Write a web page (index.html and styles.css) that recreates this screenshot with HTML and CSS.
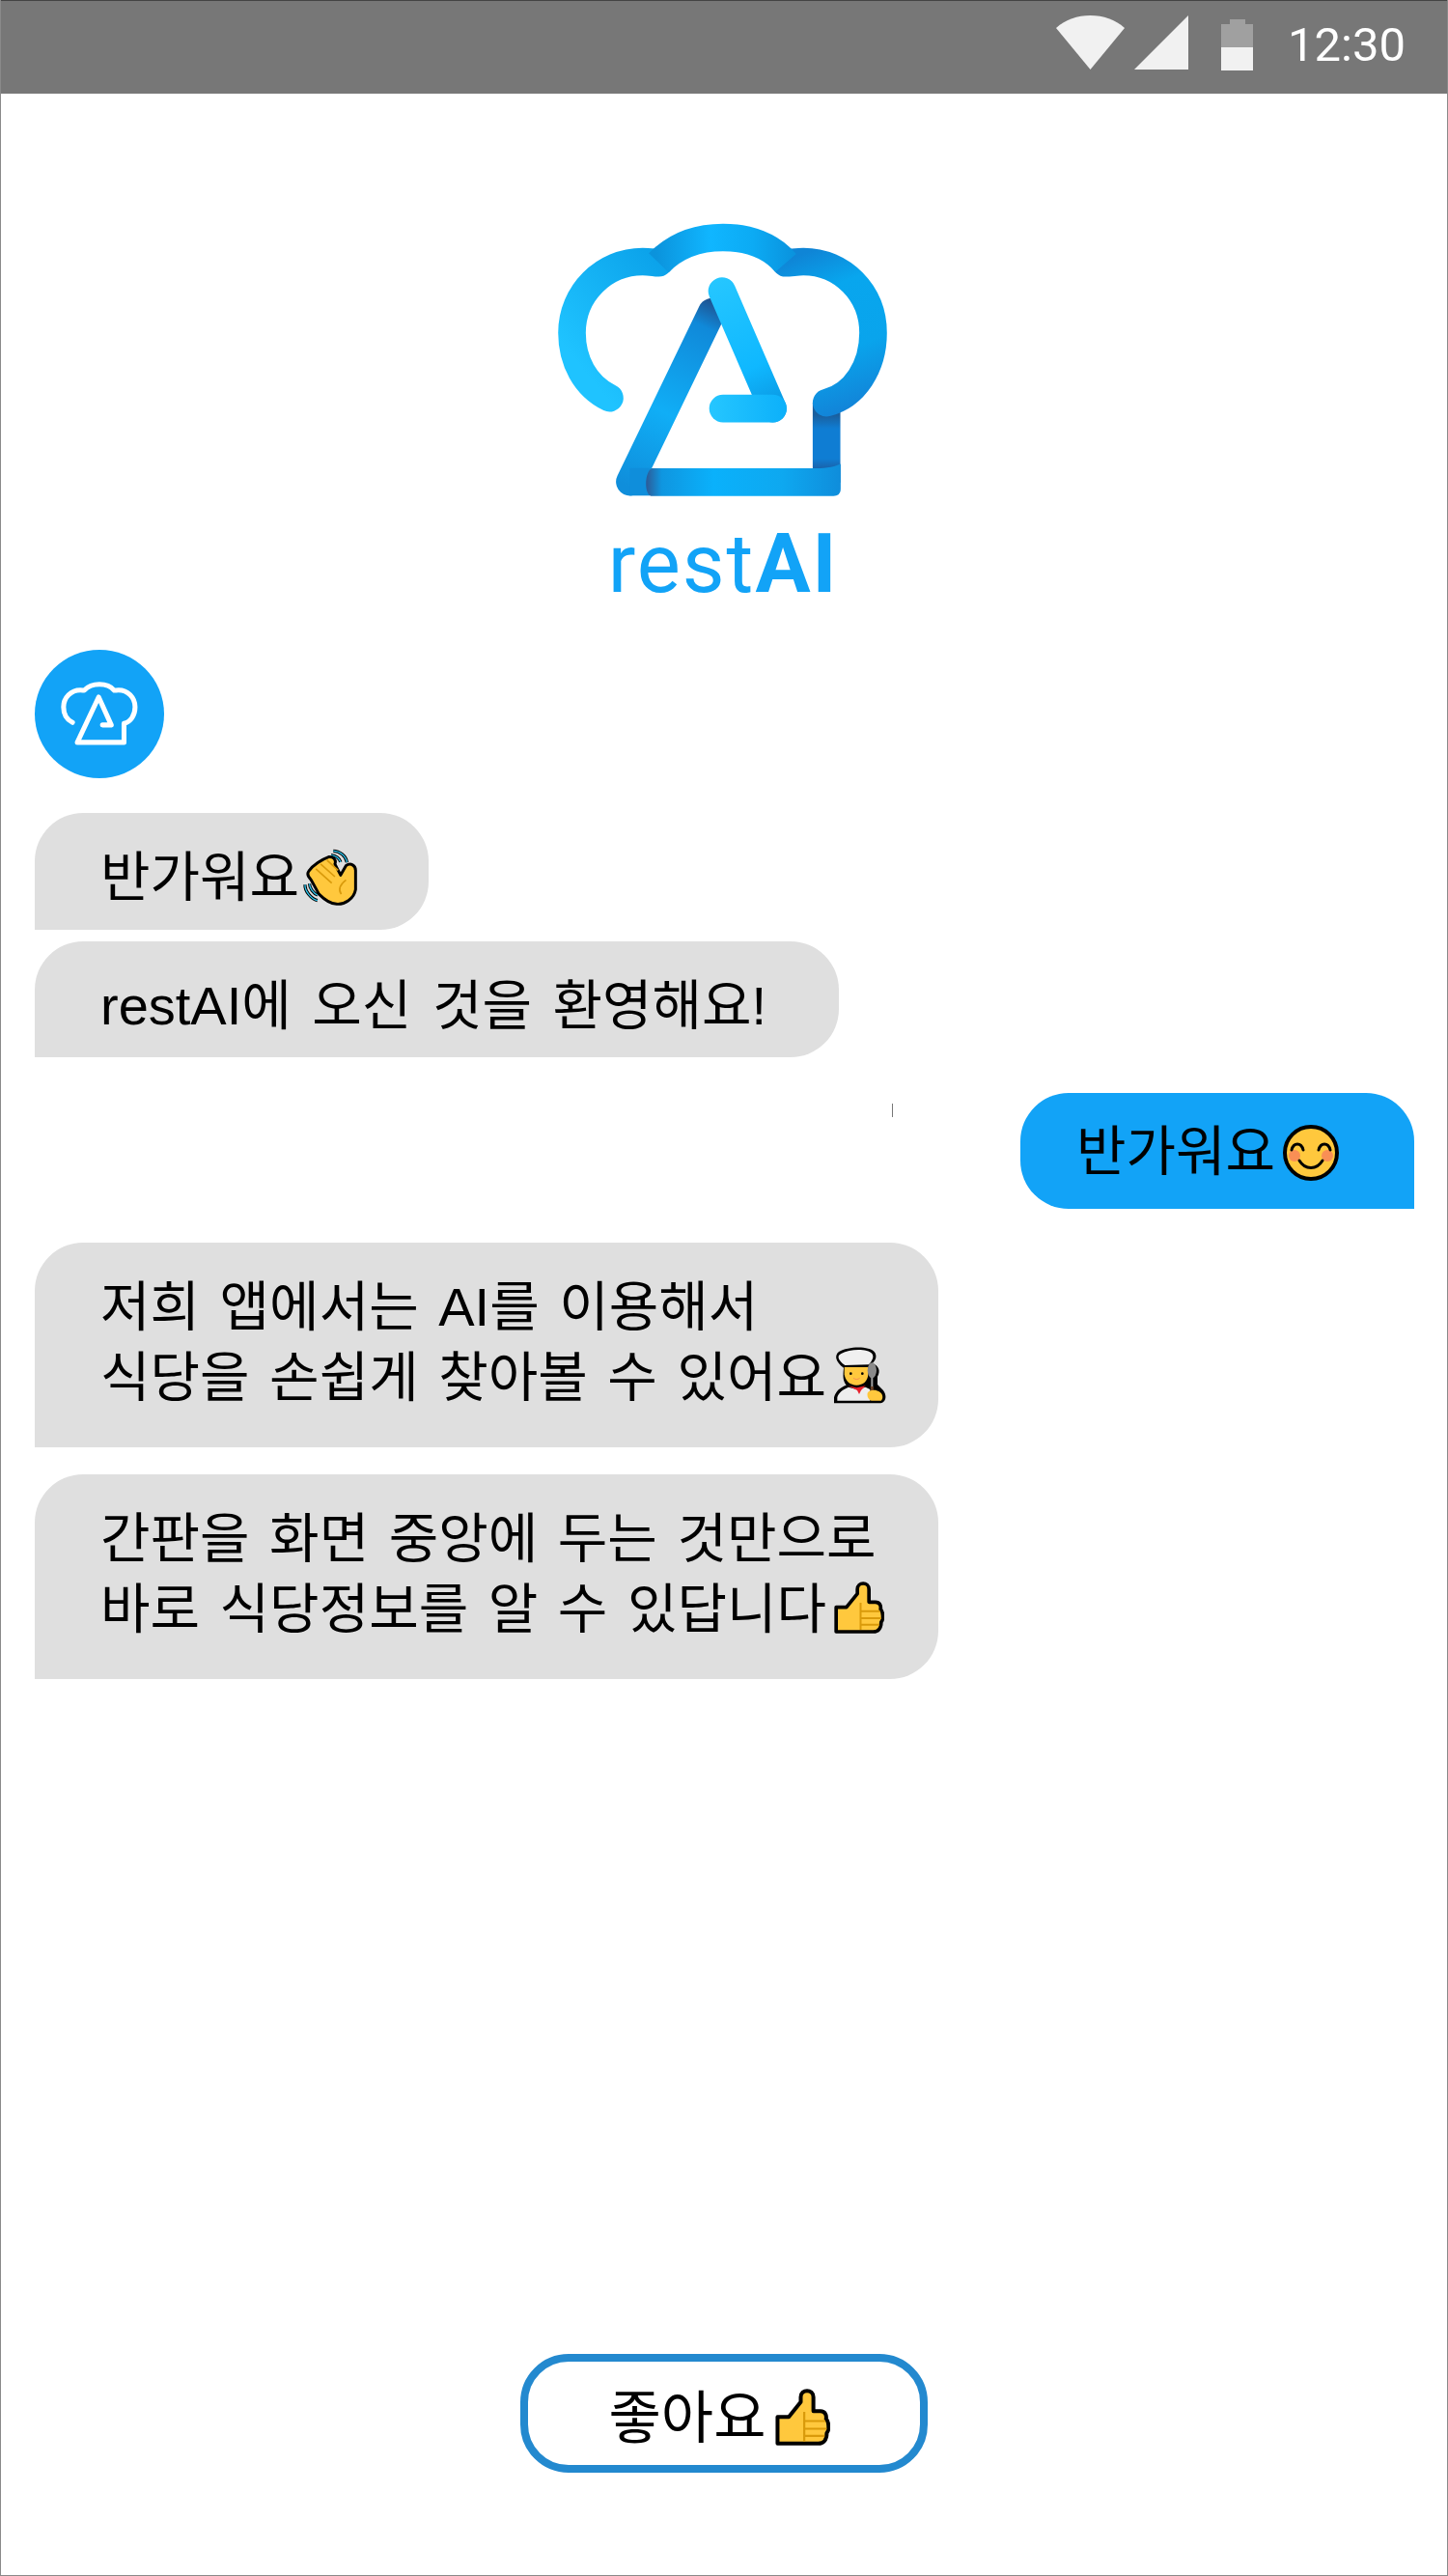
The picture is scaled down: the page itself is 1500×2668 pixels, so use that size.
FILE: index.html
```html
<!DOCTYPE html>
<html lang="ko">
<head>
    <meta charset="UTF-8">
    <meta name="viewport" content="width=device-width, initial-scale=1.0">
    <title>restAI</title>
    <link rel="stylesheet" href="styles.css">
</head>
<body>

<!-- shared icons -->
<svg class="defs" aria-hidden="true">
    <symbol id="ic-thumb" viewBox="0 0 155 162">
        <path d="M6 156V80H38L72 38V24C72 0 108 0 108 24V64H128C142 64 146 76 144 86C152 92 154 118 146 126C146 146 136 156 122 156Z" fill="#ffc83d" stroke="#000" stroke-width="11" stroke-linejoin="round"/>
        <path d="M82 66V150M82 92H142M82 114H146M82 134H140" fill="none" stroke="#d99a0b" stroke-width="6"/>
    </symbol>
    <symbol id="ic-hat" viewBox="80 60 1040 860">
        <path d="M247 607C170 570 130 490 130 405C130 280 230 183 350 183C370 183 385 186 400 187C450 135 520 108 600 108C680 108 750 135 795 187C810 187 830 183 850 183C970 183 1067 280 1067 405C1067 510 1010 600 922 620V868H310L590 275L755 640H640" fill="none" stroke="currentColor" stroke-width="64" stroke-linecap="round" stroke-linejoin="round"/>
    </symbol>
</svg>

<div class="phone">
    <div class="status-bar">
        <svg class="st-wifi" viewBox="0 0 71 56"><path d="M0 13C10 4 22 0 35.500 0S61 4 71 13L35.500 56Z" fill="#f1f1f1"/></svg>
        <svg class="st-signal" viewBox="0 0 56 56"><path d="M56 0V56H0Z" fill="#f1f1f1"/></svg>
        <div class="st-battery">
            <div class="st-nub"></div>
            <div class="st-empty"></div>
            <div class="st-full"></div>
        </div>
        <span class="st-time">12:30</span>
    </div>

    <div class="logo">
        <svg class="logo-mark" viewBox="0 0 1200 862">
            <defs>
                <linearGradient id="g-left" gradientUnits="userSpaceOnUse" x1="100" y1="440" x2="440" y2="160">
                    <stop offset="0" stop-color="#1fc3ff"/><stop offset="1" stop-color="#099fe8"/>
                </linearGradient>
                <linearGradient id="g-top" gradientUnits="userSpaceOnUse" x1="390" y1="0" x2="820" y2="0">
                    <stop offset="0" stop-color="#0b93dc"/><stop offset=".4" stop-color="#10b6ff"/><stop offset=".7" stop-color="#0cabf4"/><stop offset="1" stop-color="#0a93de"/>
                </linearGradient>
                <linearGradient id="g-right" gradientUnits="userSpaceOnUse" x1="820" y1="170" x2="1000" y2="640">
                    <stop offset="0" stop-color="#0f85d6"/><stop offset=".25" stop-color="#08a6ee"/><stop offset=".65" stop-color="#09a4ec"/><stop offset="1" stop-color="#1284d8"/>
                </linearGradient>
                <linearGradient id="g-neck" gradientUnits="userSpaceOnUse" x1="0" y1="660" x2="0" y2="830">
                    <stop offset="0" stop-color="#1a5f9e"/><stop offset=".25" stop-color="#0f7dd3"/><stop offset=".8" stop-color="#0f7dd3"/><stop offset="1" stop-color="#1b5fa6"/>
                </linearGradient>
                <linearGradient id="g-bar" gradientUnits="userSpaceOnUse" x1="360" y1="0" x2="966" y2="0">
                    <stop offset="0" stop-color="#2d5a96"/><stop offset=".08" stop-color="#0f96e0"/><stop offset=".35" stop-color="#0ab1fb"/><stop offset=".7" stop-color="#0ea8f0"/><stop offset="1" stop-color="#0f8ddb"/>
                </linearGradient>
                <linearGradient id="g-leg" gradientUnits="userSpaceOnUse" x1="570" y1="300" x2="300" y2="880">
                    <stop offset="0" stop-color="#1f4f8c"/><stop offset=".14" stop-color="#1089d9"/><stop offset=".6" stop-color="#10aef6"/><stop offset="1" stop-color="#0f8edb"/>
                </linearGradient>
                <linearGradient id="g-apex" gradientUnits="userSpaceOnUse" x1="590" y1="240" x2="760" y2="620">
                    <stop offset="0" stop-color="#25c6ff"/><stop offset=".7" stop-color="#0fb8ff"/><stop offset="1" stop-color="#0b9ce6"/>
                </linearGradient>
                <linearGradient id="g-foot" gradientUnits="userSpaceOnUse" x1="560" y1="0" x2="800" y2="0">
                    <stop offset="0" stop-color="#25c6ff"/><stop offset="1" stop-color="#0cb0fa"/>
                </linearGradient>
            </defs>
            <g transform="translate(0 -60)" fill="none" stroke-width="86" stroke-linecap="round" stroke-linejoin="round">
                <path d="M922 622V870" stroke="url(#g-neck)" stroke-linecap="butt"/>
                <path d="M795 187C810 187 830 183 850 183C970 183 1067 280 1067 405C1067 510 1010 600 922 622" stroke="url(#g-right)"/>
                <path d="M247 607C170 570 130 490 130 405C130 280 230 183 350 183C370 183 385 186 400 187" stroke="url(#g-left)"/>
                <path d="M400 187C450 135 520 108 600 108C680 108 750 135 795 187" stroke="url(#g-top)" stroke-linecap="butt"/>
                <path d="M310 868L565 340" stroke="url(#g-leg)"/>
                <path d="M310 868H372" stroke="#0f8edb" stroke-linecap="butt"/>
                <path d="M597 275L755 640" stroke="url(#g-apex)"/>
                <path d="M600 640H755" stroke="url(#g-foot)"/>
                <path d="M378 826C500 826 800 826 880 826C910 826 940 824 966 812V890Q966 912 944 912H375C355 905 355 840 378 826Z" fill="url(#g-bar)" stroke="none"/>
            </g>
        </svg>
        <div class="logo-name">rest<b>AI</b></div>
    </div>

    <div class="avatar">
        <svg class="avatar-hat"><use href="#ic-hat"/></svg>
    </div>

    <div class="bubble bot first">반가워요<svg class="emoji wave" viewBox="0 0 170 180">
        <path d="M95 9C115 9 135 25 138 45M88 22C102 24 114 32 118 44M6 115C5 135 25 160 45 165M20 112C20 126 32 142 46 148" fill="none" stroke="#000" stroke-width="10"/>
        <path d="M95 9C115 9 135 25 138 45M88 22C102 24 114 32 118 44M6 115C5 135 25 160 45 165M20 112C20 126 32 142 46 148" fill="none" stroke="#2cc4ec" stroke-width="4"/>
        <path d="M18 72C30 55 60 35 80 28C95 25 105 38 100 50L118 85L135 55C150 45 165 55 165 70V130C160 160 130 178 105 176C85 175 65 160 50 145L25 100C15 90 12 80 18 72Z" fill="#ffc83d" stroke="#000" stroke-width="9" stroke-linejoin="round"/>
        <path d="M40 65L90 110M55 50L100 90M75 38L110 70M135 100C115 115 110 130 120 145" fill="none" stroke="#d99a0b" stroke-width="5"/>
    </svg></div>
    <div class="bubble bot second">restAI에 오신 것을 환영해요!</div>

    <div class="row-me">
        <span class="cursor"></span>
        <div class="bubble me">반가워요<svg class="emoji smile" viewBox="0 0 60 60">
            <circle cx="30" cy="30" r="27" fill="#ffc83d" stroke="#000" stroke-width="4"/>
            <circle cx="13" cy="33" r="6" fill="#f98f55"/>
            <circle cx="47" cy="33" r="6" fill="#f98f55"/>
            <path d="M10 27C12 19 20 19 22 27M38 27C40 19 48 19 50 27M18 38C24 48 36 48 42 38" fill="none" stroke="#000" stroke-width="3" stroke-linecap="round"/>
        </svg></div>
    </div>

    <div class="bubble bot wide">저희 앱에서는 AI를 이용해서<br>식당을 손쉽게 찾아볼 수 있어요<svg class="emoji chef" viewBox="0 0 165 180">
        <path d="M0 178V160C5 140 20 128 38 122C28 108 27 95 30 68C5 50 0 30 15 18C45 0 110 0 125 18C135 30 130 45 118 55C140 60 145 80 135 95V120L150 135C165 150 165 178 140 178Z" fill="#000"/>
        <path d="M34 60C12 45 8 30 22 24C50 8 105 8 118 24C124 32 122 42 108 58Z" fill="#f0f0f0"/>
        <path d="M32 66H106V88C105 110 90 122 70 122C50 122 35 110 32 88Z" fill="#ffc83d"/>
        <circle cx="52" cy="86" r="4" fill="#000"/><circle cx="88" cy="86" r="4" fill="#000"/>
        <path d="M60 100C66 105 74 105 80 100" fill="none" stroke="#f98f55" stroke-width="3"/>
        <path d="M10 170V160C14 145 28 135 45 128L70 135L98 128L112 135V170Z" fill="#eee"/>
        <path d="M44 124L70 130L98 124L84 138L78 150L72 138Z" fill="#e8202c"/>
        <ellipse cx="118" cy="76" rx="14" ry="24" fill="#8a8a8a"/>
        <path d="M118 98V128" stroke="#a0a0a0" stroke-width="6"/>
        <path d="M118 126V168" stroke="#6b4226" stroke-width="9"/>
        <path d="M104 146C108 136 130 134 140 142C152 148 154 164 146 170H116C106 166 102 156 104 146Z" fill="#ffc83d"/>
    </svg></div>

    <div class="bubble bot wide">간판을 화면 중앙에 두는 것만으로<br>바로 식당정보를 알 수 있답니다<svg class="emoji thumb"><use href="#ic-thumb"/></svg></div>

    <div class="actions">
        <button class="btn-like">좋아요<svg class="emoji thumb-big"><use href="#ic-thumb"/></svg></button>
    </div>
</div>

</body>
</html>
```
FILE: styles.css
```css
body {
    margin: 0;
    background-color: #fff;
    font-family: "Liberation Sans", "Noto Sans CJK KR", sans-serif;
    color: #000;
}

.defs {
    display: none;
}

/* frame */
.phone {
    position: relative;
    box-sizing: border-box;
    width: 1500px;
    height: 2668px;
    border: 1px solid #8a8a8a;
    border-top: 0;
    display: flex;
    flex-direction: column;
}

/* status bar */
.status-bar {
    box-sizing: border-box;
    height: 97px;
    background-color: #777;
    border-top: 1px solid #444;
    display: flex;
    align-items: flex-start;
    padding-top: 15px;
    padding-left: 1093px;
}

.st-wifi {
    width: 71px;
    height: 56px;
}

.st-signal {
    width: 56px;
    height: 56px;
    margin-left: 10px;
}

.st-battery {
    width: 33px;
    margin-left: 34px;
    margin-top: 4px;
    display: flex;
    flex-direction: column;
    align-items: center;
}

.st-nub {
    width: 16px;
    height: 5px;
    background-color: #a0a0a0;
}

.st-empty {
    width: 33px;
    height: 24px;
    background-color: #a0a0a0;
}

.st-full {
    width: 33px;
    height: 24px;
    background-color: #f1f1f1;
}

.st-time {
    margin-left: 36px;
    margin-top: 3px;
    font-family: Roboto, sans-serif;
    font-size: 49px;
    line-height: 56px;
    color: #fff;
}

/* logo */
.logo {
    margin-top: 133px;
    display: flex;
    flex-direction: column;
    align-items: center;
}

.logo-mark {
    width: 400px;
    height: 287px;
    margin-left: -3px;
}

.logo-name {
    margin-top: 19px;
    margin-left: -2px;
    font-family: Roboto, sans-serif;
    font-size: 85px;
    line-height: 96px;
    letter-spacing: 2px;
    color: #12a3f7;
}

.logo-name b {
    font-weight: 700;
}

/* chat */
.avatar {
    width: 134px;
    height: 133px;
    margin: 41px 0 0 35px;
    border-radius: 50%;
    background-color: #12a3f7;
    color: #fff;
    display: flex;
    align-items: center;
    justify-content: center;
}

.avatar-hat {
    width: 84px;
    height: 68px;
    margin-top: -2px;
}

.bubble {
    box-sizing: border-box;
    font-size: 56px;
    line-height: 73px;
    white-space: nowrap;
    word-spacing: 5px;
}

.bot {
    margin-left: 35px;
    background-color: #dfdfdf;
    border-radius: 50px 50px 50px 0;
}

.first {
    width: 408px;
    height: 121px;
    margin-top: 36px;
    padding: 30px 0 0 68px;
}

.second {
    width: 833px;
    height: 120px;
    margin-top: 12px;
    padding: 30px 0 0 68px;
    word-spacing: 6px;
}

.row-me {
    position: relative;
    display: flex;
    justify-content: flex-end;
    margin-top: 37px;
    padding-right: 34px;
}

.cursor {
    position: absolute;
    left: 923px;
    top: 11px;
    width: 1px;
    height: 14px;
    background-color: #777;
}

.me {
    width: 408px;
    height: 120px;
    padding: 24px 0 0 58px;
    background-color: #12a3f7;
    border-radius: 50px 50px 0 50px;
}

.wide {
    width: 936px;
    height: 212px;
    padding: 30px 0 0 68px;
}

.wide + .wide {
    margin-top: 28px;
}

.row-me + .wide {
    margin-top: 35px;
}

.emoji {
    width: 56px;
    height: 60px;
    margin-left: 8px;
    vertical-align: -10px;
}

.wave {
    margin-left: 4px;
}

.smile {
    width: 60px;
    height: 60px;
    margin-left: 7px;
    vertical-align: -12px;
}

.chef {
    width: 55px;
    height: 60px;
    vertical-align: -8px;
}

.thumb {
    width: 52px;
    height: 54px;
    vertical-align: -6px;
}

.thumb-big {
    width: 57px;
    height: 59px;
    margin-left: 10px;
    vertical-align: -8px;
}

/* bottom action */
.actions {
    margin-top: auto;
    padding-bottom: 106px;
    display: flex;
    justify-content: center;
}

.btn-like {
    box-sizing: border-box;
    width: 422px;
    height: 123px;
    margin-left: -1px;
    padding: 0 8px 0 0;
    background-color: #fff;
    border: 8px solid #2389cf;
    border-radius: 50px;
    font-family: "Liberation Sans", "Noto Sans CJK KR", sans-serif;
    font-size: 59px;
    color: #000;
}
```
